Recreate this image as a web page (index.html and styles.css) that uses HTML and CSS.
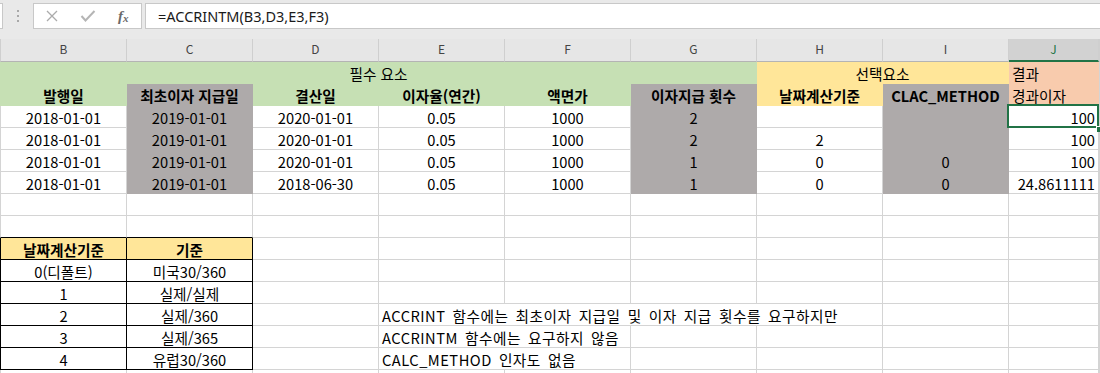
FILE: index.html
```html
<!DOCTYPE html>
<html lang="ko">
<head>
<meta charset="utf-8">
<title>ACCRINTM</title>
<link rel="stylesheet" href="styles.css">
</head>
<body>
<div class="app">
  <div class="fbar">
    <div class="namebox"></div>
    <div class="grip">
      <svg width="4" height="14" viewBox="0 0 4 14"><rect x="1" y="1" width="2" height="2" fill="#a8a8a8"/><rect x="1" y="6" width="2" height="2" fill="#a8a8a8"/><rect x="1" y="11" width="2" height="2" fill="#a8a8a8"/></svg>
    </div>
    <div class="btns">
      <span class="slot"><svg width="12" height="12" viewBox="0 0 12 12"><path d="M1 1 L11 11 M11 1 L1 11" stroke="#ababab" stroke-width="1.3" fill="none"/></svg></span>
      <span class="slot"><svg width="16" height="12" viewBox="0 0 16 12"><path d="M1.5 6 L5.5 10.5 L14.5 1" stroke="#b5b5b5" stroke-width="2" fill="none"/></svg></span>
      <span class="slot fx"><i>f</i><i class="x">x</i></span>
    </div>
    <div class="formula">=ACCRINTM(B3,D3,E3,F3)</div>
  </div>

  <div class="sheet">
    <div class="hrow">
      <div class="h">B</div><div class="h">C</div><div class="h">D</div><div class="h">E</div><div class="h">F</div><div class="h">G</div><div class="h">H</div><div class="h">I</div><div class="h sel">J</div><div class="h"></div>
    </div>

    <div class="row">
      <div class="c g s6 ctr">필수 요소</div>
      <div class="c y s2 ctr">선택요소</div>
      <div class="c p l">결과</div>
      <div class="c"></div>
    </div>
    <div class="row">
      <div class="c g ctr b">발행일</div>
      <div class="c k ctr b">최초이자 지급일</div>
      <div class="c g ctr b">결산일</div>
      <div class="c g ctr b">이자율(연간)</div>
      <div class="c g ctr b">액면가</div>
      <div class="c k ctr b">이자지급 횟수</div>
      <div class="c y ctr b">날짜계산기준</div>
      <div class="c k ctr b">CLAC_METHOD</div>
      <div class="c p l">경과이자</div>
      <div class="c"></div>
    </div>

    <div class="row">
      <div class="c ctr">2018-01-01</div><div class="c k ctr">2019-01-01</div><div class="c ctr">2020-01-01</div><div class="c ctr">0.05</div><div class="c ctr">1000</div><div class="c k ctr">2</div><div class="c ctr"></div><div class="c k ctr"></div><div class="c r active">100</div><div class="c"></div>
    </div>
    <div class="row">
      <div class="c ctr">2018-01-01</div><div class="c k ctr">2019-01-01</div><div class="c ctr">2020-01-01</div><div class="c ctr">0.05</div><div class="c ctr">1000</div><div class="c k ctr">2</div><div class="c ctr">2</div><div class="c k ctr"></div><div class="c r">100</div><div class="c"></div>
    </div>
    <div class="row">
      <div class="c ctr">2018-01-01</div><div class="c k ctr">2019-01-01</div><div class="c ctr">2020-01-01</div><div class="c ctr">0.05</div><div class="c ctr">1000</div><div class="c k ctr">1</div><div class="c ctr">0</div><div class="c k ctr">0</div><div class="c r">100</div><div class="c"></div>
    </div>
    <div class="row">
      <div class="c ctr">2018-01-01</div><div class="c k ctr">2019-01-01</div><div class="c ctr">2018-06-30</div><div class="c ctr">0.05</div><div class="c ctr">1000</div><div class="c k ctr">1</div><div class="c ctr">0</div><div class="c k ctr">0</div><div class="c r">24.8611111</div><div class="c"></div>
    </div>

    <div class="row">
      <div class="c"></div><div class="c"></div><div class="c"></div><div class="c"></div><div class="c"></div><div class="c"></div><div class="c"></div><div class="c"></div><div class="c"></div><div class="c"></div>
    </div>
    <div class="row">
      <div class="c tt"></div><div class="c tt"></div><div class="c"></div><div class="c"></div><div class="c"></div><div class="c"></div><div class="c"></div><div class="c"></div><div class="c"></div><div class="c"></div>
    </div>

    <div class="row">
      <div class="c t y ctr b">날짜계산기준</div><div class="c t y ctr b">기준</div><div class="c"></div><div class="c"></div><div class="c"></div><div class="c"></div><div class="c"></div><div class="c"></div><div class="c"></div><div class="c"></div>
    </div>
    <div class="row">
      <div class="c t ctr">0(디폴트)</div><div class="c t ctr">미국30/360</div><div class="c"></div><div class="c"></div><div class="c"></div><div class="c"></div><div class="c"></div><div class="c"></div><div class="c"></div><div class="c"></div>
    </div>
    <div class="row">
      <div class="c t ctr">1</div><div class="c t ctr">실제/실제</div><div class="c"></div><div class="c"></div><div class="c"></div><div class="c"></div><div class="c"></div><div class="c"></div><div class="c"></div><div class="c"></div>
    </div>
    <div class="row">
      <div class="c t ctr">2</div><div class="c t ctr">실제/360</div><div class="c"></div><div class="c s4 l note">ACCRINT 함수에는 최초이자 지급일 및 이자 지급 횟수를 요구하지만</div><div class="c"></div><div class="c"></div><div class="c"></div>
    </div>
    <div class="row">
      <div class="c t ctr">3</div><div class="c t ctr">실제/365</div><div class="c"></div><div class="c s2 l note">ACCRINTM 함수에는 요구하지 않음</div><div class="c"></div><div class="c"></div><div class="c"></div><div class="c"></div><div class="c"></div>
    </div>
    <div class="row">
      <div class="c t ctr">4</div><div class="c t ctr">유럽30/360</div><div class="c"></div><div class="c s2 l note">CALC_METHOD 인자도 없음</div><div class="c"></div><div class="c"></div><div class="c"></div><div class="c"></div><div class="c"></div>
    </div>
    <div class="row last">
      <div class="c"></div><div class="c"></div><div class="c"></div><div class="c"></div><div class="c"></div><div class="c"></div><div class="c"></div><div class="c"></div><div class="c"></div><div class="c"></div>
    </div>
  </div>
</div>
</body>
</html>
```

FILE: styles.css
```css
html, body {
  margin: 0;
  padding: 0;
  background: #ffffff;
}

body {
  width: 1100px;
  height: 373px;
  overflow: hidden;
  font-family: "Noto Sans CJK KR", "Noto Sans", sans-serif;
  color: #000;
}

.app {
  width: 1100px;
  height: 373px;
  overflow: hidden;
}

/* formula bar */
.fbar {
  height: 39px;
  box-sizing: border-box;
  padding-top: 3px;
  background: #e9e9e9;
  display: flex;
  align-items: flex-start;
}

.namebox {
  width: 3px;
  height: 26px;
  box-sizing: border-box;
  background: #fff;
  border: 1px solid #c8c8c8;
  border-left: none;
}

.grip {
  width: 30px;
  height: 26px;
  display: flex;
  align-items: center;
  justify-content: center;
}

.btns {
  width: 109px;
  height: 26px;
  box-sizing: border-box;
  background: #fff;
  border: 1px solid #c8c8c8;
  display: flex;
  align-items: center;
}

.slot {
  width: 36px;
  height: 24px;
  display: flex;
  align-items: center;
  justify-content: center;
}

.fx {
  font-family: "Liberation Serif", serif;
  color: #6a6a6a;
  font-size: 15px;
  font-weight: bold;
}

.fx .x {
  font-size: 11px;
  position: relative;
  top: 2px;
}

.formula {
  flex: 1;
  margin-left: 3px;
  height: 26px;
  box-sizing: border-box;
  background: #fff;
  border: 1px solid #c8c8c8;
  border-right: none;
  padding-left: 12px;
  font-family: "Noto Sans", sans-serif;
  font-size: 14.5px;
  line-height: 24px;
  color: #1a1a1a;
}

/* sheet */
.sheet {
  width: 1100px;
}

.hrow,
.row {
  display: grid;
  grid-template-columns: 127px repeat(7, 126px) 90px 1fr;
}

.hrow {
  height: 23px;
  background: #e6e6e6;
}

.h {
  box-sizing: border-box;
  border-right: 1px solid #cfcfcf;
  border-bottom: 1px solid #b4b4b4;
  text-align: center;
  font-size: 12px;
  line-height: 19px;
  color: #444;
}

.h:first-child {
  border-left: 1px solid #cfcfcf;
}

.h.sel {
  background: #d2d2d2;
  color: #217346;
  border-bottom: 2px solid #217346;
}

.row {
  height: 22px;
}

.row.last {
  height: 4px;
}

.c {
  box-sizing: border-box;
  border-right: 1px solid #d4d4d4;
  border-bottom: 1px solid #d4d4d4;
  font-size: 14.67px;
  line-height: 19px;
  padding-top: 2px;
  white-space: nowrap;
  overflow: hidden;
}

.row > .c:first-child {
  border-left: 1px solid #d4d4d4;
}

.ctr { text-align: center; }
.l { text-align: left; padding-left: 3px; }
.r { text-align: right; padding-right: 3px; }
.b { font-weight: bold; }
.note { word-spacing: 2.5px; letter-spacing: 0.5px; }

.s6 { grid-column: span 6; }
.s4 { grid-column: span 4; }
.s2 { grid-column: span 2; }

.g { background: #c6e0b4; border-color: #c6e0b4; }
.row > .g:first-child { border-left-color: #c6e0b4; }
.y { background: #ffe699; border-color: #ffe699; }
.p { background: #f8cbad; border-color: #f8cbad; }
.k { background: #aeaaaa; border-color: #aeaaaa; }

/* bordered lookup table */
.tt { border-bottom-color: #000; }
.t { border-right-color: #000; border-bottom-color: #000; }
.row > .t:first-child { border-left-color: #000; }

/* active cell */
.active {
  position: relative;
  overflow: visible;
  z-index: 2;
}

.active::after {
  content: "";
  position: absolute;
  left: -2px;
  top: -2px;
  right: -1px;
  bottom: -1px;
  border: 2px solid #217346;
}

.active::before {
  content: "";
  position: absolute;
  right: -4px;
  bottom: -5px;
  width: 5px;
  height: 5px;
  background: #217346;
  border-left: 1px solid #fff;
  border-top: 1px solid #fff;
  z-index: 3;
}
```
